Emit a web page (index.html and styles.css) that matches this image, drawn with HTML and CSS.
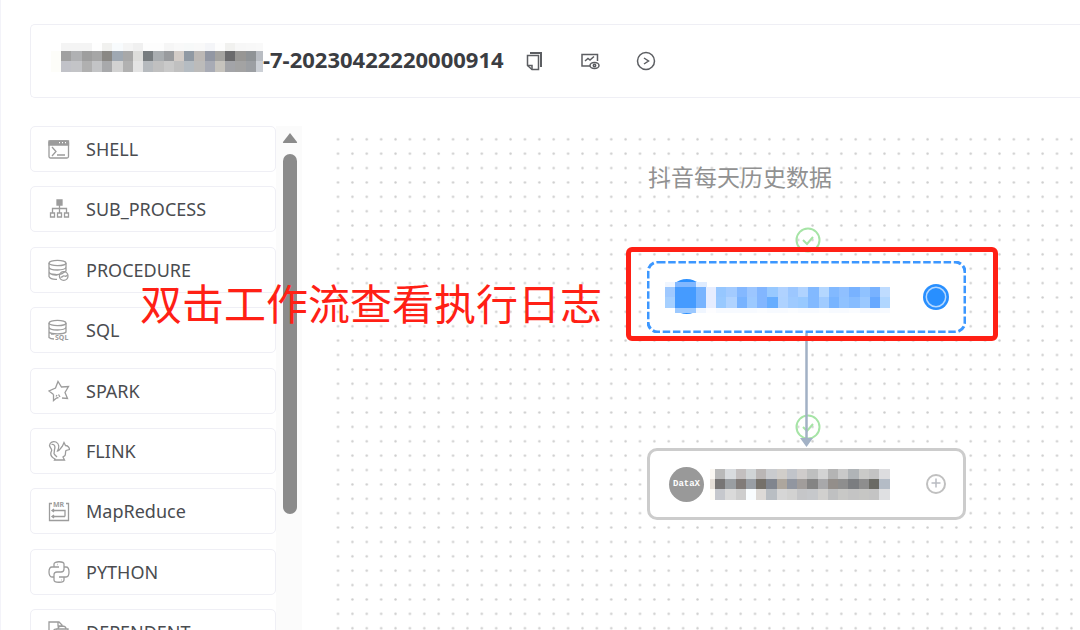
FILE: index.html
```html
<!DOCTYPE html>
<html lang="zh-CN">
<head>
    <meta charset="UTF-8">
    <meta name="viewport" content="width=device-width, initial-scale=1.0">
    <title>工作流实例</title>
    <link rel="stylesheet" href="styles.css">
</head>
<body>
    <div class="page">
        <header class="toolbar">
            <h1 class="title">
                <svg class="mosaic" data-mosaic="title" width="212" height="29" aria-hidden="true"></svg>
                <span>-7-20230422220000914</span>
            </h1>
            <div class="actions">
                <button type="button" class="icon-button" aria-label="复制名称">
                    <svg viewBox="0 0 20 20">
                        <path d="M6 2h11v14" stroke-width="2"/>
                        <path d="M3.500 4.500h11v14H8L3.500 14.500z"/>
                        <path d="M3.500 14.500H8v4"/>
                    </svg>
                </button>
                <button type="button" class="icon-button" aria-label="查看变量">
                    <svg viewBox="0 0 20 20">
                        <path d="M10 15H2V3.500h15.500V10"/>
                        <path d="M5 10l3-2.500 2 1.500 4-3.500"/>
                        <ellipse cx="14.500" cy="14.500" rx="4.500" ry="3"/>
                        <circle cx="14.500" cy="14.500" r="1.200"/>
                    </svg>
                </button>
                <button type="button" class="icon-button" aria-label="启动参数">
                    <svg viewBox="0 0 20 20">
                        <circle cx="10" cy="10" r="8.500"/>
                        <path d="M8 7l4.500 3L8 13"/>
                    </svg>
                </button>
            </div>
        </header>

        <main class="workspace">
            <ul class="tasks">
                <li><button type="button" class="task">
                    <svg viewBox="0 0 22 22"><rect x="1" y="3" width="19.500" height="17" rx="1.500"/><path d="M1 3h19.500v4H1z" fill="currentColor"/><path d="M11 4.700h1M14 4.700h1M17 4.700h1" stroke="#fff"/><path d="M4 9l4 4.500L4 18M9 17h8"/></svg>
                    <span>SHELL</span>
                </button></li>
                <li><button type="button" class="task">
                    <svg viewBox="0 0 22 22"><path d="M9 2h5v5H9z" fill="currentColor"/><path d="M11.500 7v8M4.500 15v-4.500h14V15M2.500 15h4v4h-4zM9.500 15h4v4h-4zM16.500 15h4v4h-4z"/></svg>
                    <span>SUB_PROCESS</span>
                </button></li>
                <li><button type="button" class="task">
                    <svg viewBox="0 0 22 22"><ellipse cx="9.500" cy="4" rx="8.500" ry="2.700"/><path d="M1 4v4c0 4 17 4 17 0V4M1 8v4.500c0 4 12 3.500 14 1.500l3-2V8M1 12.500v5c1 2 5 3 8 2.800M2 14.500c2 1.500 5 1.800 7.500 1.500"/><circle cx="15.700" cy="17" r="4.300"/><path d="M12.500 18c2 1 2-2 4-1s2-.5 3-1"/></svg>
                    <span>PROCEDURE</span>
                </button></li>
                <li><button type="button" class="task">
                    <svg viewBox="0 0 22 22"><ellipse cx="9.500" cy="4" rx="8.500" ry="2.700"/><path d="M1 4v4c0 4 17 4 17 0V4M1 8v5c2 2.500 15 2.500 17 0V8M1 13v5.500c1 1 2.500 1.500 5 1.500M3 15h3"/><text x="7" y="20.500">SQL</text></svg>
                    <span>SQL</span>
                </button></li>
                <li><button type="button" class="task">
                    <svg viewBox="0 0 22 22"><path d="M5.500 14.500L1 11l6.500-3L10 1.500 13.500 7l7-.5-3.500 6 2.500 6-5.500-.500M12 17l-1.500-2.500M5.500 14.500v6l3-2.500 2-.500M9 15l-1 1.500"/></svg>
                    <span>SPARK</span>
                </button></li>
                <li><button type="button" class="task">
                    <svg viewBox="0 0 22 22"><path d="M7 19c-4-2-5-5-3.500-8C4.500 9 2 8 1.500 5.500 2 2 5 1 8 2c3 1.500 3.500 5 1.500 9 2 0 3-3 5-5L16 2.500l1.500 3c2 0 4 2 4 4l-3.500 1c-1 2 0 3-1 5l-2 1.500 1.500 3H6.500zM3.500 4.500c3-1 4 2 3 5L6 14M6 14l3 3"/></svg>
                    <span>FLINK</span>
                </button></li>
                <li><button type="button" class="task">
                    <svg viewBox="0 0 22 22"><path d="M4 3.500H1.500v17h19v-17H18M4 10.500h13v6M4 16.500h13M6 9L4 10.500 6 12M6 15l-2 1.500L6 18"/><text x="5" y="7">MR</text></svg>
                    <span>MapReduce</span>
                </button></li>
                <li><button type="button" class="task">
                    <svg viewBox="0 0 22 22"><path d="M11 6H6V3c0-3 10-3 10 0v5c0 2-1 3-3 3H9c-2 0-3 1-3 3v2H4c-4 0-4-10 0-10h7M11 16h5v3c0 3-10 3-10 0v-4M16 6h2c4 0 4 10 0 10h-5M9 3.500h.5M13 19h.5"/></svg>
                    <span>PYTHON</span>
                </button></li>
                <li><button type="button" class="task">
                    <svg viewBox="0 0 22 22"><path d="M5 15H1V1h10l3 3v2M10 1v4h4M8 8h12v12H8zM10 8c0-4 8-4 8 0M14 12v4M5 10l2-2"/></svg>
                    <span>DEPENDENT</span>
                </button></li>
            </ul>

            <div class="scrollbar" aria-hidden="true">
                <svg class="scroll-arrow" width="16" height="10" viewBox="0 0 16 10"><path d="M8 0l7 9q.5 1-.500 1h-13q-1 0-.500-1z"/></svg>
                <div class="scroll-thumb"></div>
            </div>

            <section class="canvas">
                <svg class="grid" aria-hidden="true">
                    <defs>
                        <pattern id="dots" x="28.800" y="6.100" width="14.380" height="14.380" patternUnits="userSpaceOnUse">
                            <circle cx="7.200" cy="7.200" r="1.200"/>
                        </pattern>
                    </defs>
                    <rect x="29" y="6" width="100%" height="100%" fill="url(#dots)"/>
                </svg>

                <h2 class="flow-name">抖音每天历史数据</h2>

                <svg class="status status-top" viewBox="0 0 26 26"><circle cx="13" cy="13" r="11.500"/><path d="M8 13l4 4 6-7"/></svg>
                <svg class="status status-bottom" viewBox="0 0 26 26"><circle cx="13" cy="13" r="11.500"/><path d="M8 13l4 4 6-7"/></svg>
                <svg class="edge" viewBox="0 0 14 116"><path d="M6.500 0v108" stroke-width="2.500"/><path d="M0 106h13l-6.500 9z" class="edge-head"/></svg>

                <button type="button" class="node node-selected" aria-label="已选任务">
                    <svg class="node-outline" aria-hidden="true"><rect x="1" y="1" rx="10"/></svg>
                    <svg class="mosaic" data-mosaic="selected" width="225" height="36" aria-hidden="true">
                        <circle cx="21.700" cy="17.500" r="17.500" fill="#2b90ff"/>
                    </svg>
                    <svg class="node-state" width="26" height="26" viewBox="0 0 26 26"><circle cx="13" cy="13" r="13" fill="#288fff"/><circle cx="13" cy="13" r="9.700" fill="none" stroke="#b5d8ff" stroke-width="1.500"/></svg>
                </button>

                <button type="button" class="node node-plain" aria-label="DataX 任务">
                    <span class="datax">DataX</span>
                    <svg class="mosaic" data-mosaic="plain" width="180" height="31" aria-hidden="true"></svg>
                    <svg class="node-state" width="26" height="26" viewBox="0 0 26 26"><circle cx="13" cy="13" r="9" fill="none" stroke="#c0c0c0" stroke-width="2"/><path d="M8.500 12h9M13 7.500v9" stroke="#b9bcc2" stroke-width="1.500"/></svg>
                </button>

                <div class="highlight"></div>
            </section>

            <p class="note">双击工作流查看执行日志</p>
        </main>
    </div>
    <script src="mosaic.js"></script>
</body>
</html>
```

FILE: styles.css
```css
* {
    box-sizing: border-box;
}
body {
    margin: 0;
    background-color: #fff;
    color: #4a4c50;
    font-family: "Noto Sans", "Noto Sans CJK SC", sans-serif;
    overflow: hidden;
}
button {
    font-family: inherit;
    color: inherit;
    background: none;
    border: none;
    padding: 0;
    cursor: pointer;
}
h1, h2, p, ul {
    margin: 0;
    padding: 0;
}
.page {
    min-height: 100vh;
    padding: 24px 0 0 29px;
    border-left: 1px solid #f3f3f9;
}

/* header */
.toolbar {
    display: flex;
    align-items: center;
    gap: 20px;
    height: 74px;
    padding-left: 20px;
    border: 1px solid #efeff5;
    border-right: none;
    border-radius: 5px 0 0 5px;
}
.title {
    display: flex;
    align-items: center;
    height: 36px;
    margin-bottom: 4px;
    font-size: 22px;
    line-height: 30px;
    font-weight: 700;
    color: #3b3d42;
    white-space: nowrap;
}
.title .mosaic {
    margin-bottom: 4px;
}
.actions {
    display: flex;
    gap: 36px;
}
.icon-button {
    width: 20px;
    height: 20px;
    color: #5c5e62;
}
.icon-button svg {
    display: block;
    fill: none;
    stroke: currentColor;
    stroke-width: 1.5;
}
.mosaic {
    display: block;
    flex: none;
}

/* task list */
.workspace {
    position: relative;
    display: flex;
    height: calc(100vh - 126px);
    margin-top: 28px;
}
.tasks {
    display: flex;
    flex-direction: column;
    justify-content: space-between;
    flex: none;
    width: 246px;
    height: 529px;
    list-style: none;
}
.task {
    display: flex;
    align-items: center;
    gap: 16px;
    width: 100%;
    height: 46px;
    padding: 0 17px;
    border: 1px solid #efeff5;
    border-radius: 5px;
    font-size: 18px;
    line-height: 24px;
}
.task svg {
    width: 22px;
    height: 22px;
    color: #9c9c9c;
    fill: none;
    stroke: currentColor;
    stroke-width: 1.3;
}
.task text {
    font-size: 7px;
    font-weight: 700;
    fill: currentColor;
    stroke: none;
}
.scrollbar {
    flex: none;
    width: 26px;
    padding: 7px 0 0 6px;
    background-color: #fbfbfb;
}
.scroll-arrow {
    display: block;
    fill: #8b8b8b;
}
.scroll-thumb {
    width: 14px;
    height: 360px;
    margin: 11px 0 0 1px;
    border-radius: 7px;
    background-color: #8b8b8b;
}

/* flow canvas */
.canvas {
    position: relative;
    flex: 1;
    min-width: 0;
}
.grid {
    display: block;
    width: 100%;
    height: 100%;
    fill: #ccc;
}
.flow-name {
    position: absolute;
    left: 346px;
    top: 35px;
    font-size: 23px;
    line-height: 32px;
    font-weight: 400;
    color: #919191;
    white-space: nowrap;
}
.status {
    position: absolute;
    left: 493px;
    width: 26px;
    height: 26px;
    fill: none;
    stroke: #a6e4a6;
    stroke-width: 2;
}
.status-top {
    top: 101px;
}
.status-bottom {
    top: 288px;
}
.edge {
    position: absolute;
    left: 498px;
    top: 206px;
    width: 14px;
    height: 116px;
    stroke: #a2b1c5;
}
.edge-head {
    fill: #a2b1c5;
    stroke: none;
}
.node {
    position: absolute;
    left: 345px;
    display: flex;
    align-items: center;
    width: 319px;
    height: 72px;
    border-radius: 10px;
    background-color: #fff;
}
.node-selected {
    top: 135px;
    padding-left: 18px;
}
.node-plain {
    top: 322px;
    padding-left: 19px;
    border: 3px solid #ccc;
}
.node-outline {
    position: absolute;
    left: 0;
    top: 0;
    width: 100%;
    height: 100%;
}
.node-outline rect {
    width: calc(100% - 2px);
    height: calc(100% - 2px);
    fill: none;
    stroke: #3c97ff;
    stroke-width: 3;
    stroke-dasharray: 7.500 2.700;
}
.node-state {
    position: absolute;
    right: 17px;
}
.node-plain .node-state {
    right: 14px;
}
.datax {
    display: flex;
    align-items: center;
    justify-content: center;
    flex: none;
    width: 35px;
    height: 35px;
    margin-right: 6px;
    border-radius: 50%;
    background-color: #999;
    color: #fff;
    font-family: "Liberation Mono", monospace;
    font-size: 9px;
    font-weight: 700;
}
.highlight {
    position: absolute;
    left: 324px;
    top: 121px;
    width: 372px;
    height: 94px;
    border: 5px solid #ff2015;
    border-radius: 6px;
    pointer-events: none;
}
.note {
    position: absolute;
    left: 110px;
    top: 150px;
    font-size: 42px;
    line-height: 56px;
    color: #ff2015;
    white-space: nowrap;
    pointer-events: none;
}
```

FILE: mosaic.js
```js
// masked names: every row is [top, height, colours from left to right]
const mosaics = {
    title: {
        start: 0,
        rows: [
            [0, 8, 'ffffff f4f4f4 f4f4f4 f4f4f4 fefefe f1f1ef f8fbfd f5f5f5 f0f0f0 fdfdfd fdfdfd f6f6f6 f9f9f9 f7f9f9 f9f9f9 f4f5f8 fdfdfd f1f1ef f7f7f7 f8f8f8 f9f9f9'],
            [8, 10, 'fdfdf9 a0a0a0 b0b1b3 9e9e9e a6a6a6 8a8884 9fa8b2 a8a8a8 dddddb 777c7f a9adb0 999b9e d3ccc7 9099a3 bcb8b5 9297a3 a4a3a0 6a6a6c 979694 8f9396 b9bdc3'],
            [18, 11, 'fdfdf9 c1c2c8 c3c4c7 b0b0b0 c3c4c6 a8a9ab d2d2d2 b1b1b1 e4e4e4 b6babe c0c0c0 c9c9c9 c0c0c0 b5bcc2 bcbbba a8abb5 c6c3bd a3a4a8 a3a3a3 9c9fa3 ccd0d6']
        ]
    },
    selected: {
        start: 0,
        rows: [
            [3, 5, 'f0f6ff 82b8ff 82b8ff dfecff'],
            [8, 10, '9fc9ff 459bff 459bff 78b4ff e6edff 96c7ff a3cbff 84b8ff 9cc6ff 82b6ff 98c9ff b0d2ff 9cc7ff b0d3ff 82b9ff b4d7ff 82b9ff 90c0ff 78b2ff 90c2ff 78b2ff bfdcff'],
            [18, 11, 'a6d0ff 459bff 459bff 78b4ff e6edff 98c9ff b0d3ff 78b3ff 9cc9ff 82b6ff 66adff aed2ff 9ecaff 98c9ff 82b9ff a0cbff 78b4ff 90c2ff 86bcff 9ac8ff 66a8ff b0d6ff'],
            [29, 5, 'ffffff 9cc9ff 9cc9ff f0f6ff fdfdff f7faff f7faff f7faff f7faff fafcff f7faff f7faff fafcff f7faff f7faff fafcff f7faff f7faff fafcff f4f8ff f4f8ff f7faff']
        ]
    },
    plain: {
        start: -5,
        rows: [
            [0, 10, 'faf7f2 b9b9b9 d8dbde c3bfbf d0d4d6 bab6b5 c9cbce d1ceca c1c4ca cfcccb bebfbf d3d3d3 b4b4b4 c9c9c9 b0b4b7 cacac8 c3c3c3 dddddf'],
            [10, 10, 'e5dfd8 777575 9a9ea2 817b78 999ea4 757069 80858e ada69d 9196a0 a19d9b 848484 a8a8aa 938e8a 8e8e8e 7b7d80 8e8e8e 6a6a64 b4bcc6'],
            [20, 11, 'fdfbf6 c6c8cd dadada cecece f9fdff dddad7 b9bec3 d6d6d6 d2d2d1 c5c6c8 c6c8cb d1d0ce bfc0c1 c8c8c6 c4c4c4 c6c6c4 c4c4c4 dfe0e2']
        ]
    }
};
const cell = 10.24;

document.querySelectorAll('[data-mosaic]').forEach(function(svg) {
    const mosaic = mosaics[svg.dataset.mosaic];
    mosaic.rows.forEach(function([top, height, colours]) {
        colours.split(' ').forEach(function(colour, i) {
            const rect = document.createElementNS('http://www.w3.org/2000/svg', 'rect');
            rect.setAttribute('x', Math.round(mosaic.start + i * cell));
            rect.setAttribute('y', top);
            rect.setAttribute('width', 11);
            rect.setAttribute('height', height);
            rect.setAttribute('fill', '#' + colour);
            svg.appendChild(rect);
        });
    });
});
```
